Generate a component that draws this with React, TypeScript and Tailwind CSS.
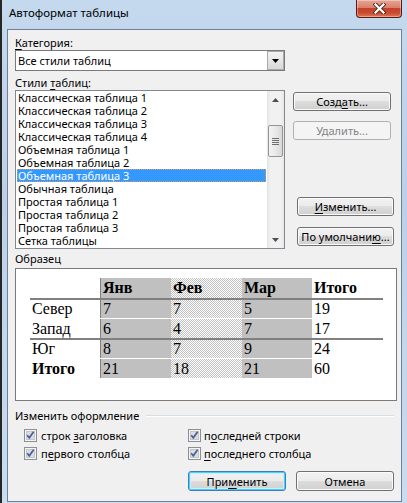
import React from 'react';

const ui = "font-['Noto_Sans',sans-serif] text-[11px] leading-[15px] text-black";
const serif = "font-['Liberation_Serif',serif] text-[16px] text-black";

function U({ children }: { children: React.ReactNode }) {
  return <span className="underline decoration-1 underline-offset-[2px]">{children}</span>;
}

type BtnProps = {
  children: React.ReactNode;
  className?: string;
  disabled?: boolean;
  isDefault?: boolean;
};

function WinButton({ children, className = '', disabled, isDefault }: BtnProps) {
  let look =
    'border-[#707070] bg-[linear-gradient(#f2f2f2_0%,#ebebeb_49%,#dddddd_50%,#cfcfcf_100%)] shadow-[inset_0_0_0_1px_#fbfbfb] text-black';
  if (disabled) look = 'border-[#adb2b5] bg-[#f4f4f4] text-[#838383]';
  if (isDefault)
    look =
      'border-[#3c7fb1] bg-[linear-gradient(#f2f2f2_0%,#ebebeb_49%,#dddddd_50%,#cfcfcf_100%)] shadow-[inset_0_0_0_1px_#48cffd,inset_0_0_0_2px_#cfeefc] text-black';
  return (
    <div className={`flex items-center justify-center rounded-[3px] border ${look} ${className}`}>
      {children}
    </div>
  );
}

function CloseButton() {
  return (
    <div className="ml-auto mr-[5px] w-[46px] h-[18px] rounded-b-[4px] border border-t-0 border-[#5b1a10] bg-[linear-gradient(180deg,#e8a596_0%,#d9806b_45%,#c5412a_50%,#c74b30_75%,#dd7556_100%)] shadow-[inset_0_0_0_1px_rgba(255,255,255,0.35)] flex items-center justify-center">
      <svg width="13" height="11" viewBox="0 0 13 11">
        <path d="M2.5 1.5 L10.5 9.5 M10.5 1.5 L2.5 9.5" stroke="#4a2a26" strokeWidth="4" strokeLinecap="square" />
        <path d="M2.5 1.5 L10.5 9.5 M10.5 1.5 L2.5 9.5" stroke="#ffffff" strokeWidth="2.2" strokeLinecap="square" />
      </svg>
    </div>
  );
}

function CheckBox() {
  return (
    <svg width="13" height="13" viewBox="0 0 13 13" className="shrink-0">
      <rect x="0.5" y="0.5" width="12" height="12" fill="#f4f4f4" stroke="#8e8f8f" />
      <rect x="2" y="2" width="9" height="9" fill="#dadcdf" />
      <rect x="2.5" y="2.5" width="8" height="8" fill="none" stroke="#c3c6ca" />
      <path d="M3.2 6.3 L5.3 8.8 L9.6 2.8" stroke="#4a5f97" strokeWidth="1.7" fill="none" />
    </svg>
  );
}

const styles = [
  'Классическая таблица 1',
  'Классическая таблица 2',
  'Классическая таблица 3',
  'Классическая таблица 4',
  'Объемная таблица 1',
  'Объемная таблица 2',
  'Объемная таблица 3',
  'Обычная таблица',
  'Простая таблица 1',
  'Простая таблица 2',
  'Простая таблица 3',
  'Сетка таблицы',
];

const sampleRows = [
  { cells: ['', 'Янв', 'Фев', 'Мар', 'Итого'], row: 'h-[22px] border-b-2 border-[#808080] leading-[20px]', bold: 'all' },
  { cells: ['Север', '7', '7', '5', '19'], row: 'h-[19px] border-b border-white leading-[18px]', bold: 'none' },
  { cells: ['Запад', '6', '4', '7', '17'], row: 'h-[21px] border-b-2 border-[#808080] leading-[19px]', bold: 'none' },
  { cells: ['Юг', '8', '7', '9', '24'], row: 'h-[19px] border-b border-white leading-[18px]', bold: 'none' },
  { cells: ['Итого', '21', '18', '21', '60'], row: 'h-[19px] leading-[19px]', bold: 'first' },
];

const colLook = [
  'w-[70px] bg-white',
  'w-[71px] bg-[#c0c0c0] border-l border-[#808080]',
  'w-[71px] bg-[repeating-conic-gradient(#c0c0c0_0%_25%,#ffffff_0%_50%)] bg-[length:2px_2px]',
  'w-[70px] bg-[#c0c0c0]',
  'w-[71px] bg-white',
];

function ArrowUp() {
  return (
    <svg width="7" height="4" viewBox="0 0 7 4">
      <polygon points="3.5,0 7,4 0,4" fill="#505050" />
    </svg>
  );
}

function ArrowDown({ color = '#505050' }: { color?: string }) {
  return (
    <svg width="7" height="4" viewBox="0 0 7 4">
      <polygon points="0,0 7,0 3.5,4" fill={color} />
    </svg>
  );
}

export default function App() {
  return (
    <div
      className={`w-[407px] h-[503px] overflow-hidden flex flex-col border-l-2 border-[#262626] bg-[linear-gradient(180deg,#c4d8ee_0%,#bcd1e9_40%,#c9dcf0_100%)] ${ui}`}
    >
      <div className="h-[29px] flex items-start shrink-0">
        <div className="pl-[7px] pt-[5px] text-[11.5px] leading-[15px]">Автоформат таблицы</div>
        <CloseButton />
      </div>

      <div className="ml-[5px] w-[395px] h-[473px] shrink-0 border border-[#6f8196] bg-[#f0f0f0] px-[7px] flex flex-col">
        <div className="mt-[5px] h-[15px]">
          <U>К</U>атегория:
        </div>
        <div className="h-[21px] w-[270px] border border-[#7a7a7a] bg-white flex">
          <div className="pl-[2px] leading-[19px]">Все стили таблиц</div>
          <div className="ml-auto w-[17px] h-full border border-[#a9a9a9] bg-[linear-gradient(#f4f4f4,#d8d8d8)] flex items-center justify-center">
            <ArrowDown color="#000000" />
          </div>
        </div>

        <div className="mt-[4px] h-[15px]">
          Стили <U>т</U>аблиц:
        </div>

        <div className="flex">
          <div className="w-[270px] h-[159px] border border-[#828790] bg-white flex">
            <div className="w-[251px] px-[1px] leading-[13px]">
              {styles.map((s, i) =>
                i === 6 ? (
                  <div
                    key={s}
                    className="h-[13px] bg-[#3399ff] text-white border border-dotted border-[#d99a5a] leading-[11px] pl-[0px]"
                  >
                    {s}
                  </div>
                ) : (
                  <div key={s} className="h-[13px] pl-[1px]">
                    {s}
                  </div>
                )
              )}
            </div>
            <div className="w-[17px] h-full bg-[linear-gradient(90deg,#e3e3e3_0%,#f1f1f1_20%,#f1f1f1_80%,#e8e8e8_100%)] flex flex-col items-center">
              <div className="h-[17px] flex items-center justify-center">
                <ArrowUp />
              </div>
              <div className="mt-[17px] w-[15px] h-[32px] rounded-[2px] border border-[#959595] bg-[linear-gradient(90deg,#f3f3f3_0%,#e9e9e9_50%,#d8d8d8_100%)] flex flex-col items-center justify-center gap-[1px]">
                <div className="w-[7px] h-[1px] bg-[#6e6e6e]" />
                <div className="w-[7px] h-[1px] bg-[#6e6e6e]" />
                <div className="w-[7px] h-[1px] bg-[#6e6e6e]" />
                <div className="w-[7px] h-[1px] bg-[#6e6e6e]" />
              </div>
              <div className="mt-auto h-[17px] flex items-center justify-center">
                <ArrowDown />
              </div>
            </div>
          </div>

          <div className="ml-[8px] flex flex-col">
            <WinButton className="mt-[2px] w-[98px] h-[19px]">
              Созд<U>а</U>ть...
            </WinButton>
            <WinButton disabled className="mt-[10px] w-[98px] h-[19px]">
              Удалить...
            </WinButton>
            <WinButton className="mt-[57px] ml-[4px] w-[97px] h-[19px]">
              <U>И</U>зменить...
            </WinButton>
            <WinButton className="mt-[11px] ml-[4px] w-[97px] h-[19px]">
              По умолчани<U>ю</U>...
            </WinButton>
          </div>
        </div>

        <div className="mt-[2px] h-[15px]">Образец</div>
        <div className="mt-[2px] w-[382px] h-[133px] border border-[#7a7a7a] bg-white pl-[14px] pt-[9px]">
          <div className={`w-[353px] ${serif}`}>
            {sampleRows.map((r, ri) => (
              <div key={ri} className={`flex ${r.row}`}>
                {r.cells.map((c, ci) => {
                  const bold = r.bold === 'all' || (r.bold === 'first' && ci === 0);
                  return (
                    <div key={ci} className={`h-full pl-[2px] ${colLook[ci]} ${bold ? 'font-bold' : ''}`}>
                      {c}
                    </div>
                  );
                })}
              </div>
            ))}
          </div>
        </div>

        <div className="mt-[7px] h-[15px] flex items-center">
          <span>Изменить оформление</span>
          <div className="ml-[7px] flex-1 h-[2px] border-t border-[#d5dfe5] border-b border-b-white" />
        </div>

        <div className="mt-[5px] pl-[9px] grid grid-cols-[164px_1fr] gap-y-[3px]">
          <div className="h-[15px] flex items-center gap-[4px]">
            <CheckBox />
            <span>
              строк <U>з</U>аголовка
            </span>
          </div>
          <div className="h-[15px] flex items-center gap-[3px]">
            <CheckBox />
            <span>
              п<U>о</U>следней строки
            </span>
          </div>
          <div className="h-[15px] flex items-center gap-[4px]">
            <CheckBox />
            <span>
              п<U>е</U>рвого столбца
            </span>
          </div>
          <div className="h-[15px] flex items-center gap-[3px]">
            <CheckBox />
            <span>
              <U>п</U>оследнего столбца
            </span>
          </div>
        </div>

        <div className="mt-[10px] flex justify-end gap-[10px]">
          <WinButton isDefault className="w-[98px] h-[20px]">
            При<U>м</U>енить
          </WinButton>
          <WinButton className="w-[98px] h-[20px]">Отмена</WinButton>
        </div>
      </div>
    </div>
  );
}
